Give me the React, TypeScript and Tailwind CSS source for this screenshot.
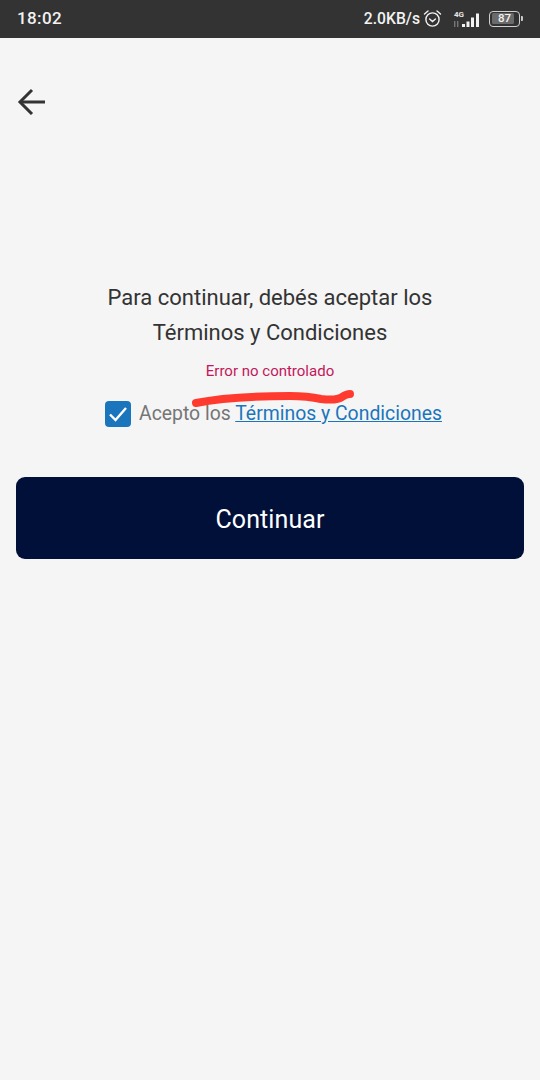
export default function App() {
  return (
    <div className="relative w-[540px] h-[1080px] bg-[#f5f5f5] flex flex-col font-['Roboto',sans-serif] overflow-hidden">
      <div className="h-[38px] bg-[#333333] flex items-center pl-[17px] pr-[17px] text-[#f2f2f2] shrink-0">
        <span className="text-[17px] font-medium tracking-[0.4px]">18:02</span>
        <div className="ml-auto flex items-center">
          <span className="text-[15.7px] font-medium">2.0KB/s</span>
          <svg className="ml-[3px]" width="19" height="19" viewBox="0 0 19 19" fill="none" stroke="#f2f2f2" strokeWidth="1.4">
            <circle cx="9.5" cy="10.5" r="6.6" />
            <path d="M6.6 10l2.9 2.6 2.9-2.6" strokeLinecap="round" />
            <path d="M1.5 5l3.5-3M17.5 5L14 2" strokeLinecap="round" />
          </svg>
          <svg className="ml-[11px]" width="30" height="19" viewBox="0 0 30 19">
            <text x="1" y="7.5" fontSize="8" fontWeight="700" fill="#e6e6e6" fontFamily="Roboto, sans-serif">4G</text>
            <rect x="1" y="12" width="1.4" height="6" fill="#777" />
            <rect x="4" y="12" width="1.4" height="6" fill="#777" />
            <rect x="9" y="15" width="3" height="3" fill="#f2f2f2" />
            <rect x="13.5" y="12.5" width="3" height="5.5" fill="#f2f2f2" />
            <rect x="18" y="8.5" width="3" height="9.5" fill="#f2f2f2" />
            <rect x="23" y="4.5" width="3" height="13.500" fill="#f2f2f2" />
          </svg>
          <div className="ml-[6px] flex items-center">
            <div className="w-[31px] h-[16px] rounded-[4px] border border-[#d0d0d0] p-[1.5px] relative">
              <div className="h-full w-[87%] bg-[#6a6a6a] rounded-[1.5px]" />
              <span className="absolute inset-0 flex items-center justify-center text-[11.5px] font-medium text-[#f2f2f2]">87</span>
            </div>
            <div className="w-[2px] h-[5px] ml-[1px] bg-[#c8c8c8] rounded-r-[1px]" />
          </div>
        </div>
      </div>

      <div className="h-[218px] pt-[49px] pl-[17px] shrink-0">
        <svg width="28" height="28" viewBox="0 0 28 28" fill="none" stroke="#333333" strokeWidth="3">
          <path d="M28 15H3" />
          <path d="M15 3L3 15l12 12" />
        </svg>
      </div>

      <div className="flex flex-col items-center">
        <p className="mt-[24px] text-center text-[22px] leading-[35px] text-[#333333]">
          Para continuar, debés aceptar los
          <br />
          Términos y Condiciones
        </p>
        <p className="mt-[12px] text-[15px] leading-[18px] text-[#c2185b]">Error no controlado</p>
        <div className="relative mt-[21px] w-full flex items-center pl-[105px]">
          <div className="w-[26px] h-[26px] bg-[#1b75bc] rounded-[4px] flex items-center justify-center">
            <svg width="20" height="16" viewBox="0 0 20 16" fill="none" stroke="#ffffff" strokeWidth="2.4">
              <path d="M2 8.5l5.5 5.5L18 2" />
            </svg>
          </div>
          <span className="ml-[8px] text-[19.4px] leading-[26px] text-[#757575]">
            Acepto los <span className="text-[#1b75bc] underline">Términos y Condiciones</span>
          </span>
          <svg className="absolute left-[188px] top-[-23px]" width="172" height="32" viewBox="0 0 172 32" fill="none">
            <path d="M8 25C32 20 66 18 102 18c14 0 22 1 31 3 9 1 17 1 21-2 3-2 5-3 8-3" stroke="#ff3b30" strokeWidth="8" strokeLinecap="round" />
          </svg>
        </div>
      </div>

      <div className="pl-[16px] pr-[16px] mt-[50px]">
        <button className="w-full h-[82px] pt-[3px] bg-[#001038] rounded-[9px] text-white text-[25px] tracking-[0.1px]">Continuar</button>
      </div>
    </div>
  );
}
